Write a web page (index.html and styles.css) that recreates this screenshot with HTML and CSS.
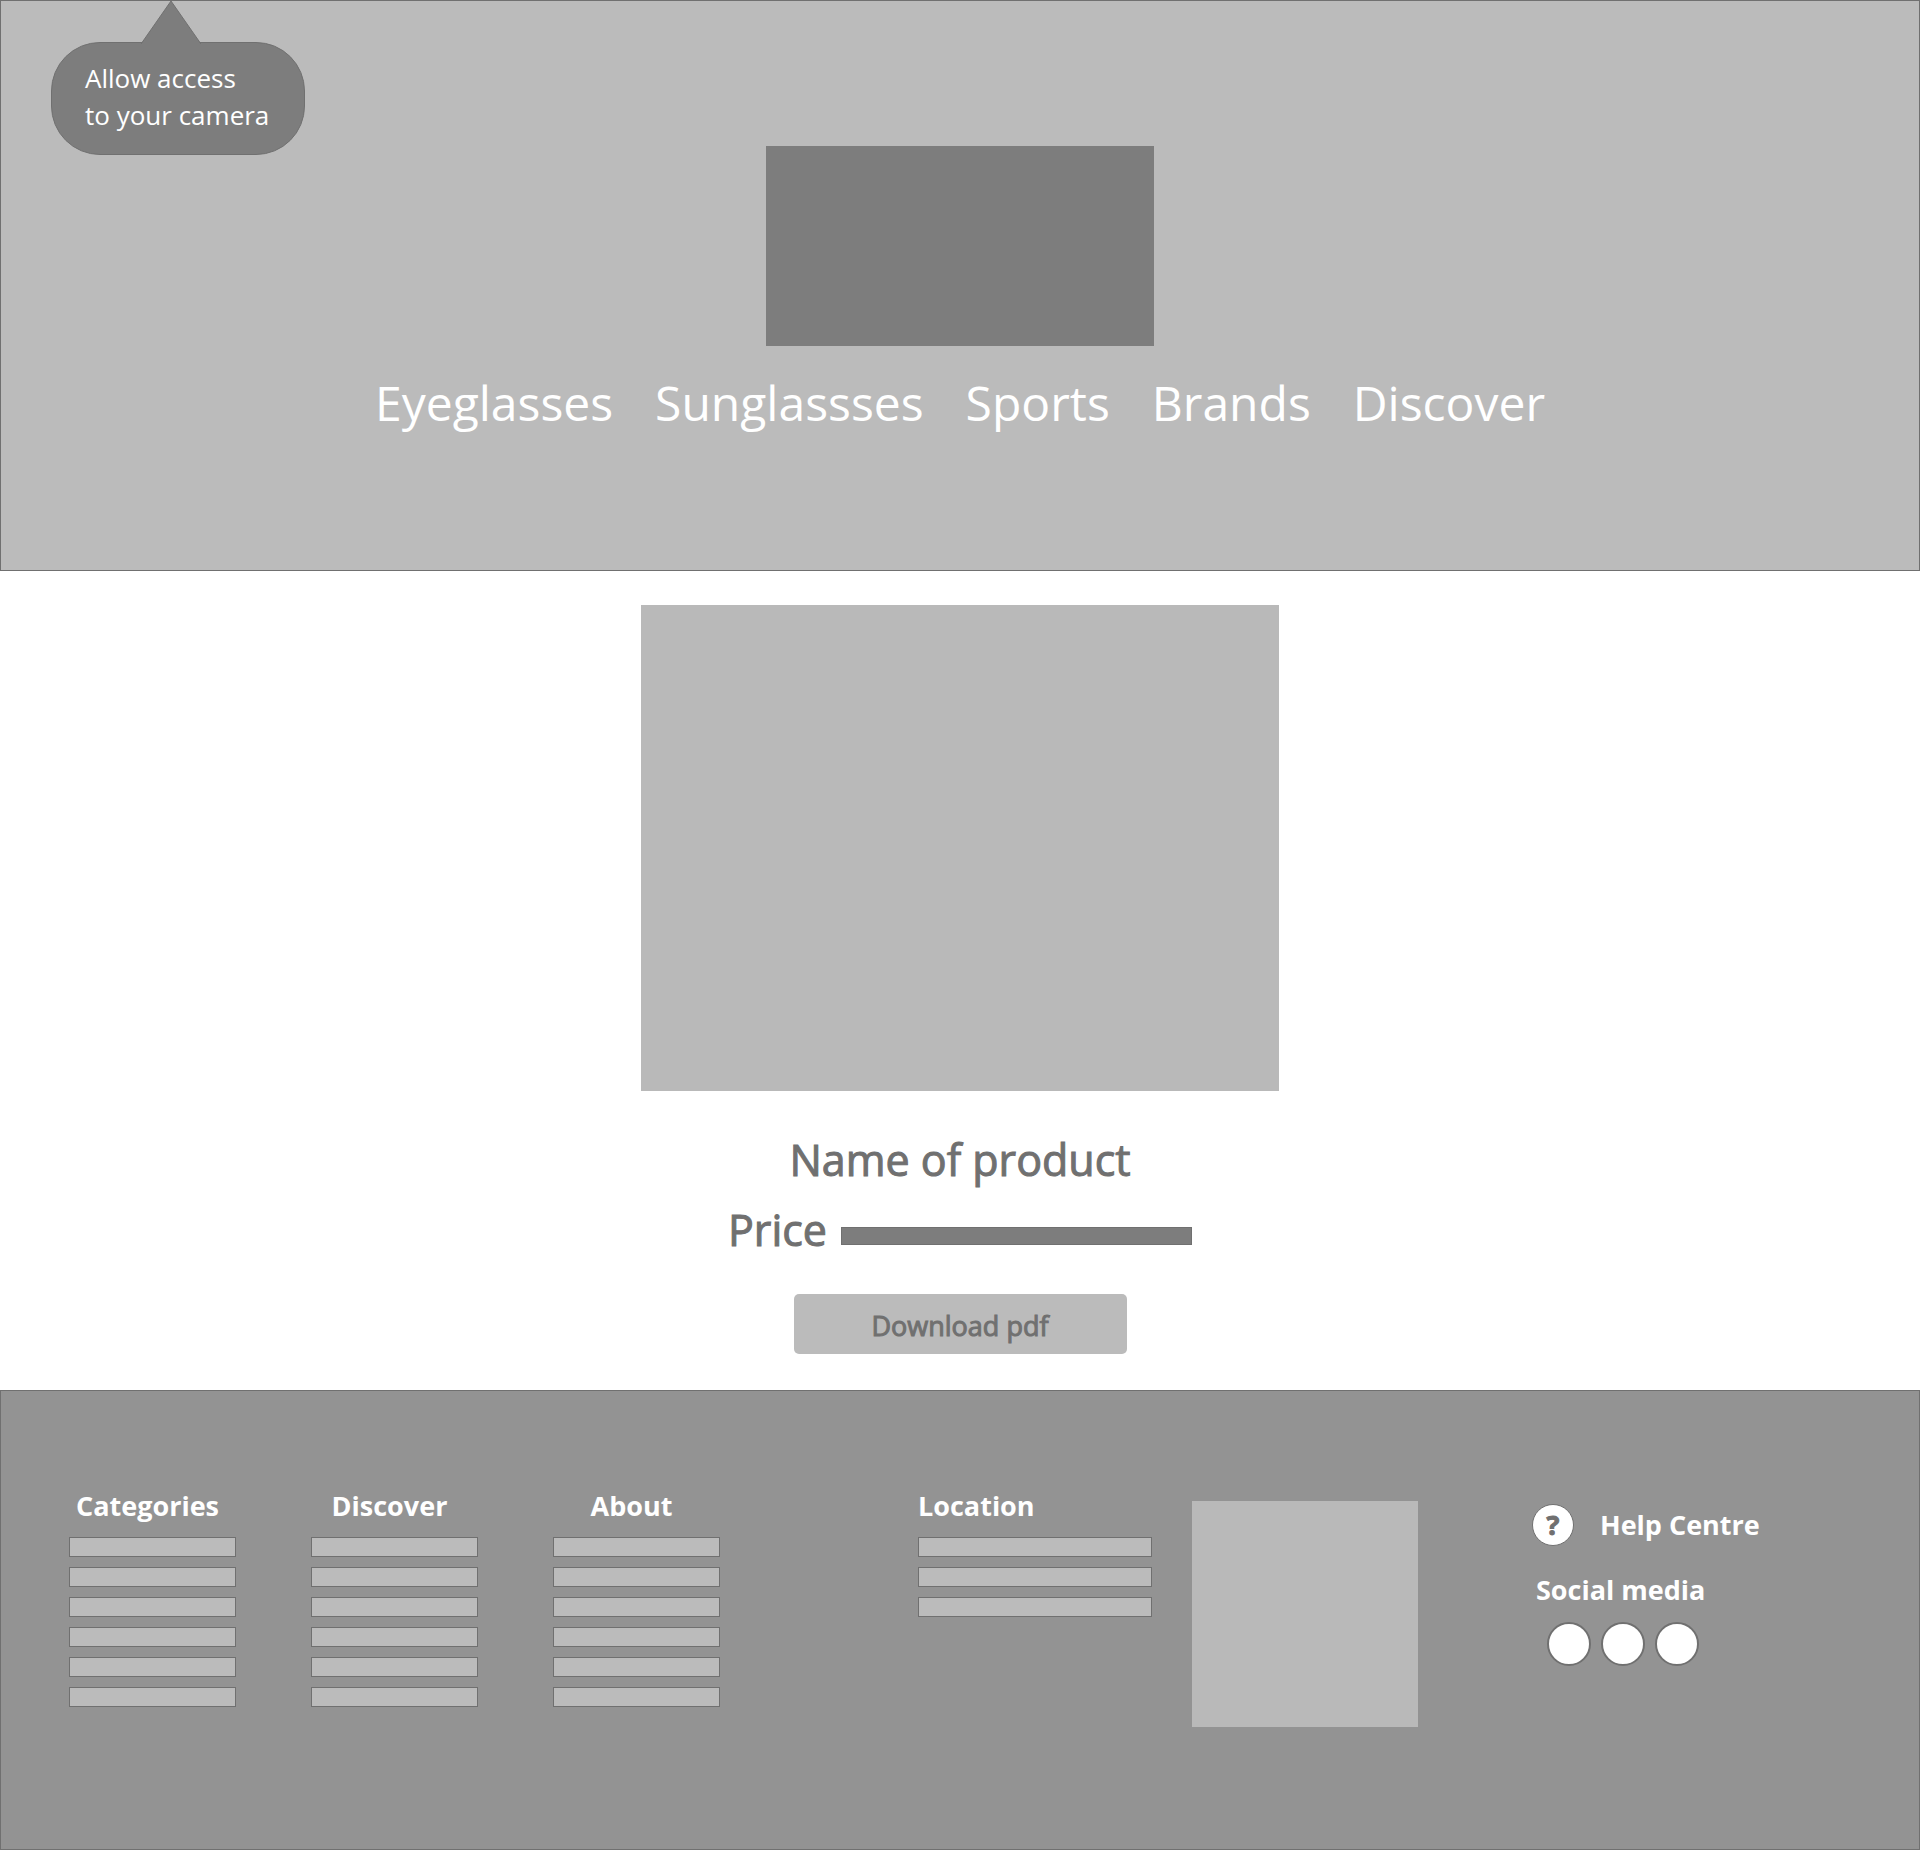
FILE: index.html
```html
<!DOCTYPE html>
<html lang="en">
<head>
  <meta charset="utf-8">
  <meta name="viewport" content="width=device-width, initial-scale=1">
  <title>Name of product</title>
  <link rel="stylesheet" href="styles.css">
</head>
<body>
  <header class="header">
    <div class="bubble" role="status">
      <svg class="bubble-pointer" width="60" height="43" viewBox="0 0 60 43" aria-hidden="true">
        <path d="M0 43 L30 0 L60 43" fill="#7d7d7d" stroke="#707070"/>
      </svg>
      Allow access<br>to your camera
    </div>
    <div class="logo"></div>
    <nav class="nav">
      <a href="#">Eyeglasses</a>
      <a href="#">Sunglassses</a>
      <a href="#">Sports</a>
      <a href="#">Brands</a>
      <a href="#">Discover</a>
    </nav>
  </header>

  <main class="product">
    <div class="product-image"></div>
    <h1 class="product-name">Name of product</h1>
    <p class="price">Price <span class="price-value"></span></p>
    <button class="download" type="button">Download pdf</button>
  </main>

  <footer class="footer">
    <section class="links">
      <h2>Categories</h2>
      <ul><li></li><li></li><li></li><li></li><li></li><li></li></ul>
    </section>
    <section class="links">
      <h2>Discover</h2>
      <ul><li></li><li></li><li></li><li></li><li></li><li></li></ul>
    </section>
    <section class="links">
      <h2>About</h2>
      <ul><li></li><li></li><li></li><li></li><li></li><li></li></ul>
    </section>
    <section class="location">
      <h2>Location</h2>
      <ul><li></li><li></li><li></li></ul>
    </section>
    <div class="map"></div>
    <section class="contact">
      <a class="help" href="#"><span class="help-icon" aria-hidden="true">?</span>Help Centre</a>
      <h2>Social media</h2>
      <div class="social">
        <a href="#" aria-label="Social profile 1"></a>
        <a href="#" aria-label="Social profile 2"></a>
        <a href="#" aria-label="Social profile 3"></a>
      </div>
    </section>
  </footer>
</body>
</html>
```
FILE: styles.css
```css
* {
  box-sizing: border-box;
}

body {
  display: flex;
  flex-direction: column;
  min-height: 100vh;
  margin: 0;
  background: #fff;
  color: #707070;
  font-family: "Open Sans", "Noto Sans", sans-serif;
  font-size: 27px;
}

h1,
h2,
p,
ul {
  margin: 0;
  padding: 0;
}

ul {
  list-style: none;
}

a {
  color: inherit;
  text-decoration: none;
}

/* Header */
.header {
  position: relative;
  display: flex;
  flex-direction: column;
  align-items: center;
  padding: 145px 24px 137px;
  border: 1px solid #707070;
  background: #bbb;
  color: #fff;
}

.bubble {
  position: absolute;
  top: 41px;
  left: 50px;
  width: 254px;
  padding: 17px 0 20px 33px;
  border: 1px solid #707070;
  border-radius: 49px;
  background: #7d7d7d;
  line-height: 37px;
  font-size: 26px;
  white-space: nowrap;
}

.bubble-pointer {
  position: absolute;
  top: -42px;
  left: 89px;
}

.logo {
  width: 388px;
  max-width: 100%;
  height: 200px;
  background: #7d7d7d;
}

.nav {
  display: flex;
  flex-wrap: wrap;
  justify-content: center;
  gap: 0 42px;
  margin-top: 27px;
  font-size: 48px;
  line-height: 60px;
}

/* Product */
.product {
  display: flex;
  flex-direction: column;
  align-items: center;
  padding: 34px 24px 36px;
}

.product-image {
  width: 638px;
  max-width: 100%;
  height: 486px;
  background: #b9b9b9;
}

.product-name,
.price {
  font-size: 43px;
  font-weight: 400;
  line-height: 60px;
  -webkit-text-stroke: 1px #707070;
}

.product-name {
  margin-top: 39px;
}

.price {
  display: flex;
  align-items: center;
  gap: 14px;
  margin-top: 10px;
}

.price-value {
  width: 351px;
  height: 18px;
  margin-top: 12px;
  border: 1px solid #707070;
  background: #7d7d7d;
}

.download {
  width: 333px;
  height: 60px;
  margin-top: 34px;
  padding: 2px 0 0;
  border: 0;
  border-radius: 5px;
  background: #bbb;
  color: #707070;
  font: inherit;
  -webkit-text-stroke: 1px #707070;
}

/* Footer */
.footer {
  display: grid;
  flex: 1;
  grid-template-columns: 242fr 242fr 365fr 274fr 340fr 387fr;
  align-items: start;
  padding: 97px 0 96px 68px;
  border: 1px solid #707070;
  background: #939393;
  color: #fff;
}

.footer h2,
.help {
  font-size: 27px;
  font-weight: 700;
  line-height: 36px;
}

.footer ul {
  display: grid;
  gap: 10px;
  margin-top: 13px;
}

.footer li {
  height: 20px;
  border: 1px solid #707070;
  background: #bbb;
}

.links {
  width: 167px;
}

.links h2 {
  padding-right: 10px;
  text-align: center;
}

.location {
  width: 234px;
}

.map {
  width: 226px;
  height: 226px;
  margin-top: 13px;
  background: #b9b9b9;
}

.help {
  display: flex;
  align-items: center;
  gap: 26px;
  margin-top: 16px;
}

.help-icon {
  width: 42px;
  height: 42px;
  border: 1px solid #707070;
  border-radius: 50%;
  background: #fff;
  color: #707070;
  line-height: 40px;
  text-align: center;
  -webkit-text-stroke: 1px #707070;
}

.contact h2 {
  margin-top: 26px;
  padding-left: 4px;
}

.social {
  display: flex;
  gap: 10px;
  margin-top: 14px;
  padding-left: 15px;
}

.social a {
  width: 44px;
  height: 44px;
  border: 2px solid #707070;
  border-radius: 50%;
  background: #fff;
}
```
